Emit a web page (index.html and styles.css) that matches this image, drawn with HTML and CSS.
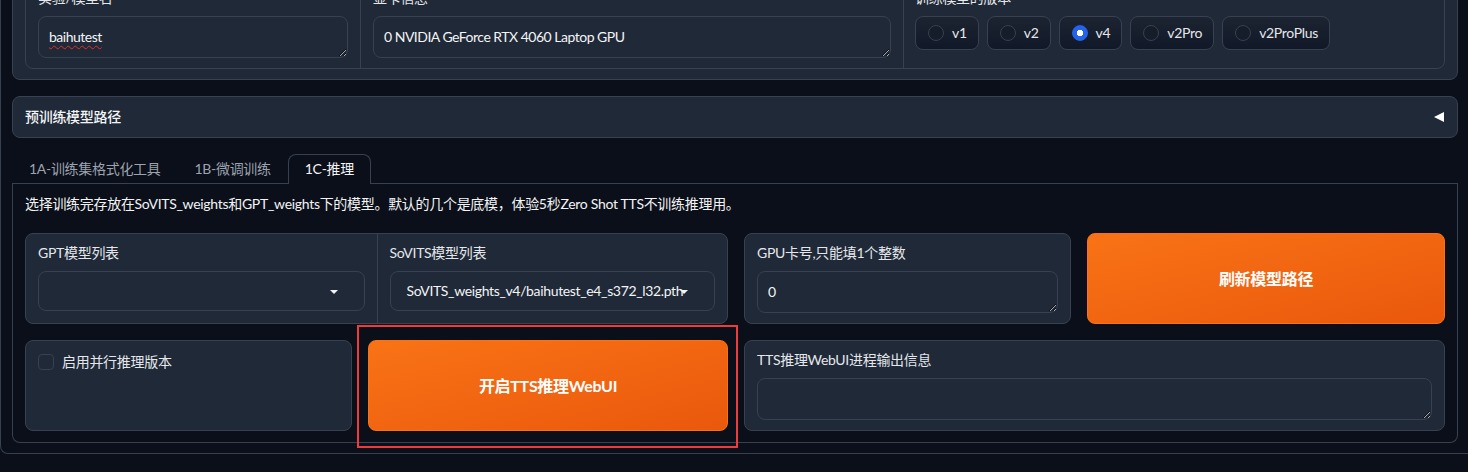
FILE: index.html
```html
<!DOCTYPE html>
<html lang="zh-CN">
<head>
<meta charset="utf-8">
<title>GPT-SoVITS WebUI</title>
<link rel="stylesheet" href="styles.css">
</head>
<body>
<div class="page">
  <section class="block top-block">
    <div class="group cols-3">
      <div class="field">
        <span class="label">实验/模型名</span>
        <textarea class="input spell" rows="1">baihutest</textarea>
      </div>
      <div class="field">
        <span class="label">显卡信息</span>
        <textarea class="input" rows="1">0 NVIDIA GeForce RTX 4060 Laptop GPU</textarea>
      </div>
      <div class="field">
        <span class="label">训练模型的版本</span>
        <div class="radios">
          <label class="radio"><span class="dot"></span>v1</label>
          <label class="radio"><span class="dot"></span>v2</label>
          <label class="radio"><span class="dot checked"></span>v4</label>
          <label class="radio"><span class="dot"></span>v2Pro</label>
          <label class="radio"><span class="dot"></span>v2ProPlus</label>
        </div>
      </div>
    </div>
  </section>

  <div class="accordion">
    <span>预训练模型路径</span>
    <svg class="caret" width="10" height="10" viewBox="0 0 10 10"><polygon points="10,0 10,10 0,5" fill="#ffffff"/></svg>
  </div>

  <div class="tabs">
    <div class="tab-nav">
      <button class="tab">1A-训练集格式化工具</button>
      <button class="tab">1B-微调训练</button>
      <button class="tab selected">1C-推理</button>
    </div>
    <div class="tab-panel">
      <p class="desc">选择训练完存放在SoVITS_weights和GPT_weights下的模型。默认的几个是底模，体验5秒Zero Shot TTS不训练推理用。</p>
      <div class="row row-1">
        <div class="group cols-2">
          <div class="field">
            <span class="label">GPT模型列表</span>
            <div class="dropdown"><span class="value"></span><span class="arrow"></span></div>
          </div>
          <div class="field">
            <span class="label">SoVITS模型列表</span>
            <div class="dropdown"><span class="value">SoVITS_weights_v4/baihutest_e4_s372_l32.pth</span><span class="arrow"></span></div>
          </div>
        </div>
        <div class="panel field">
          <span class="label">GPU卡号,只能填1个整数</span>
          <textarea class="input" rows="1">0</textarea>
        </div>
        <button class="primary">刷新模型路径</button>
      </div>
      <div class="row row-2">
        <div class="panel check-panel">
          <label class="check"><span class="box"></span>启用并行推理版本</label>
        </div>
        <div class="annotated">
          <button class="primary">开启TTS推理WebUI</button>
        </div>
        <div class="panel field">
          <span class="label">TTS推理WebUI进程输出信息</span>
          <textarea class="input" rows="1"></textarea>
        </div>
      </div>
    </div>
  </div>
</div>
</body>
</html>
```

FILE: styles.css
```css
* { box-sizing: border-box; }

html, body {
  margin: 0;
  background: #0b0f19;
  overflow: hidden;
}

body {
  font-family: Lato, "Noto Sans CJK SC", sans-serif;
  font-size: 14px;
  line-height: 20px;
  letter-spacing: -0.3px;
  color: #f3f4f6;
}

.page {
  margin-top: -35px;
  border-left: 1px solid #374151;
  border-bottom: 1px solid #374151;
  border-bottom-left-radius: 8px;
  padding: 0 10px 10px 11px;
  display: flex;
  flex-direction: column;
  gap: 16px;
}

.block {
  background: #1f2937;
  border: 1px solid #374151;
  border-radius: 8px;
}

.top-block {
  padding: 12px 12px 10px;
}

.group {
  background: #1f2937;
  border: 1px solid #374151;
  border-radius: 8px;
  display: grid;
}

.cols-3 { grid-template-columns: 334px 543px 1fr; }
.cols-2 { grid-template-columns: 1fr 1fr; }

.group > .field + .field { border-left: 1px solid #374151; }

.field {
  display: flex;
  flex-direction: column;
  gap: 8px;
  padding: 9px 12px 10px;
  min-width: 0;
}

.cols-3 > .field:last-child { padding-left: 11px; }

.cols-2 > .field { padding-bottom: 12px; }

.label {
  color: #e5e7eb;
  font-size: 14px;
  line-height: 20px;
  white-space: nowrap;
}

.input {
  display: block;
  width: 100%;
  height: 42px;
  padding: 10px;
  margin: 0;
  background: #1f2937;
  color: #f3f4f6;
  border: 1px solid #374151;
  border-radius: 8px;
  font: inherit;
  line-height: 20px;
  letter-spacing: -0.5px;
  resize: vertical;
  overflow: hidden;
  outline: none;
  color-scheme: dark;
}

.spell {
  text-decoration: underline wavy #e0302f;
  text-decoration-thickness: 1px;
  text-underline-offset: 3px;
}

.radios {
  display: flex;
  gap: 8px;
}

.radio {
  display: flex;
  align-items: center;
  gap: 8px;
  padding: 6px 11px 6px 12px;
  border: 1px solid #374151;
  border-radius: 8px;
  background: linear-gradient(to bottom, #1c2331, #111827);
  color: #e5e7eb;
  line-height: 20px;
}

.dot {
  width: 16px;
  height: 16px;
  border-radius: 50%;
  border: 1px solid #374151;
  background: #161d2a;
}

.dot.checked {
  border-color: #2563eb;
  background: radial-gradient(circle, #ffffff 0 3px, #2563eb 3.5px);
}

.accordion {
  background: #1f2937;
  border: 1px solid #374151;
  border-radius: 8px;
  padding: 10px 13px 10px 12px;
  display: flex;
  align-items: center;
  justify-content: space-between;
  font-weight: 500;
  color: #f3f4f6;
}

.caret { display: block; }

.tab-nav {
  display: flex;
  border-bottom: 1px solid #374151;
}

.tab {
  font: inherit;
  line-height: 20px;
  letter-spacing: -0.3px;
  color: #9ca3af;
  background: transparent;
  border: 1px solid transparent;
  border-bottom: none;
  border-radius: 8px 8px 0 0;
  padding: 4px 16px 5px;
  margin: 0 0 -1px;
}

.tab.selected {
  color: #f3f4f6;
  background: #0b0f19;
  border-color: #374151;
}

.tab-panel {
  border: 1px solid #374151;
  border-top: none;
  border-radius: 0 0 8px 8px;
  padding: 10px 12px 11px;
  display: flex;
  flex-direction: column;
  gap: 16px;
}

.desc {
  margin: 0 0 3px;
  color: #f3f4f6;
}

.row {
  display: grid;
  gap: 16px;
}

.row-1 { grid-template-columns: 703px 327px 1fr; }
.row-2 { grid-template-columns: 327px 360px 1fr; }

.panel {
  background: #1f2937;
  border: 1px solid #374151;
  border-radius: 8px;
}

.dropdown {
  position: relative;
  height: 40px;
  border: 1px solid #374151;
  border-radius: 8px;
  background: #1f2937;
  display: flex;
  align-items: center;
  padding: 0 16px;
}

.dropdown .value {
  white-space: nowrap;
  letter-spacing: -0.35px;
  color: #f3f4f6;
}

.dropdown .arrow {
  position: absolute;
  right: 26px;
  top: 18px;
  width: 0;
  height: 0;
  border-left: 4px solid transparent;
  border-right: 4px solid transparent;
  border-top: 4px solid #f3f4f6;
}

.primary {
  width: 100%;
  height: 100%;
  font: inherit;
  font-size: 16px;
  font-weight: 700;
  letter-spacing: -0.3px;
  color: #ffffff;
  background: linear-gradient(to bottom right, #f97316, #ea580c);
  border: 1px solid #f97316;
  border-radius: 8px;
  margin: 0;
}

.annotated {
  position: relative;
}

.annotated::after {
  content: "";
  position: absolute;
  top: -15px;
  bottom: -17px;
  left: -11px;
  right: -10px;
  border: 2px solid #ef3b3b;
  pointer-events: none;
}

.check-panel {
  padding: 11px 12px;
}

.check {
  display: flex;
  align-items: center;
  gap: 8px;
  color: #e5e7eb;
}

.box {
  width: 16px;
  height: 16px;
  border: 1px solid #374151;
  border-radius: 4px;
  background: #1f2937;
}
```
